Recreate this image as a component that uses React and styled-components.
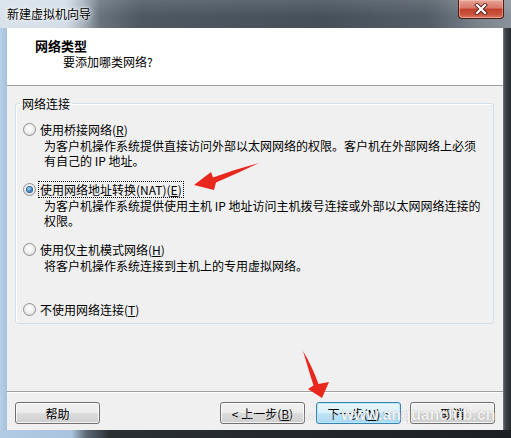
import React from 'react';
import styled, { createGlobalStyle } from 'styled-components';

const GlobalStyle = createGlobalStyle`
  html, body {
    margin: 0;
    padding: 0;
    background: #1f2327;
  }
  body {
    font-family: "Noto Sans CJK SC", "Microsoft YaHei", sans-serif;
    font-size: 12px;
    color: #000;
  }
`;

const Window = styled.div`
  position: relative;
  width: 511px;
  height: 438px;
  display: flex;
  flex-direction: column;
  overflow: hidden;
`;

const TitleBar = styled.div`
  height: 28px;
  display: flex;
  justify-content: space-between;
  align-items: flex-start;
  background:
    linear-gradient(to bottom, rgba(255, 255, 255, 0.12), rgba(255, 255, 255, 0) 60%),
    linear-gradient(
      to right,
      #d9e3ec 0,
      #d2dde8 66px,
      #aab5c0 82px,
      #68737e 100px,
      #4d5863 140px,
      #46505b 320px,
      #535d67 430px,
      #7b848d 480px,
      #8a939b 100%
    );
`;

const Caption = styled.div`
  line-height: 28px;
  padding-left: 7px;
  font-size: 12px;
  color: #000;
  text-shadow: 0 0 6px #fff, 0 0 3px #fff;
`;

const CloseButton = styled.div`
  width: 46px;
  height: 19px;
  margin-right: 7px;
  box-sizing: border-box;
  border: 1px solid #4b1c16;
  border-top: none;
  border-radius: 0 0 4px 4px;
  display: grid;
  place-items: center;
  background: linear-gradient(
    to bottom,
    #e7a497 0%,
    #d8786a 45%,
    #c2402c 50%,
    #c9523f 80%,
    #dc7a62 100%
  );
  box-shadow: inset 0 0 0 1px rgba(255, 210, 200, 0.45);
`;

const Middle = styled.div`
  flex: 1;
  display: flex;
  min-height: 0;
`;

const SideFrame = styled.div`
  width: ${(p) => p.$width}px;
  background: ${(p) =>
    p.$dark
      ? 'linear-gradient(to right, #767e86 0, #40464c 2px, #262a2e 100%)'
      : 'linear-gradient(to right, #b7cfe7, #a6c1dc)'};
`;

const BottomFrame = styled.div`
  height: 8px;
  background: linear-gradient(
    to right,
    #b3cbe4 0,
    #a9c3de 72px,
    #5d6873 86px,
    #2a2f34 110px,
    #1c2024 100%
  );
`;

const Client = styled.div`
  flex: 1;
  display: flex;
  flex-direction: column;
  background: #f0f0f0;
`;

const Header = styled.div`
  height: 58px;
  box-sizing: border-box;
  padding: 10px 0 0 28px;
  background: #fff;
  border-bottom: 1px solid #a0a0a0;
`;

const HeaderTitle = styled.div`
  font-size: 13px;
  font-weight: bold;
  line-height: 16px;
`;

const HeaderSub = styled.div`
  line-height: 15px;
  padding-left: 28px;
`;

const Body = styled.div`
  flex: 1;
  padding: 10px 9px 0 8px;
`;

const Group = styled.fieldset`
  margin: 0;
  padding: 0 7px 6px;
  border: 1px solid #d5dfe5;
  border-radius: 3px;
  box-shadow: inset 1px 1px 0 #fff;
  min-width: 0;
`;

const GroupLabel = styled.legend`
  margin-left: -3px;
  padding: 0 2px;
  line-height: 15px;
`;

const Options = styled.div`
  padding-top: 10px;
  display: flex;
  flex-direction: column;
`;

const Option = styled.div`
  min-height: 60px;
  &:last-child {
    min-height: 0;
  }
`;

const OptionHead = styled.div`
  display: flex;
  align-items: center;
  height: 16px;
`;

const Radio = styled.span`
  width: 13px;
  height: 13px;
  box-sizing: border-box;
  border-radius: 50%;
  border: 1px solid #8d9195;
  background: radial-gradient(circle at 50% 40%, #ffffff 0, #f1f1f1 45%, #d3d3d3 100%);
  display: grid;
  place-items: center;
  margin-right: 3px;

  &::after {
    content: '';
    width: 5px;
    height: 5px;
    border-radius: 50%;
    background: ${(p) =>
      p.$checked ? 'radial-gradient(circle at 40% 35%, #a9dcfa 0, #3a86c8 55%, #174f8a 100%)' : 'transparent'};
    box-shadow: ${(p) => (p.$checked ? '0 0 0 1px #2b5f93' : 'none')};
  }
`;

const OptionLabel = styled.span`
  line-height: 15px;
  padding: 0 1px;
  outline: ${(p) => (p.$focused ? '1px dotted #000' : 'none')};
`;

const OptionText = styled.div`
  padding-left: 21px;
  line-height: 15px;
  padding-top: 1px;
`;

const Footer = styled.div`
  height: 39px;
  box-sizing: border-box;
  padding: 10px 8px 0;
  border-top: 1px solid #a0a0a0;
  box-shadow: inset 0 1px 0 #fff;
  display: flex;
  align-items: flex-start;
`;

const Spacer = styled.div`
  flex: 1;
`;

const Button = styled.div`
  width: 85px;
  height: 22px;
  box-sizing: border-box;
  margin-left: ${(p) => p.$gap || 0}px;
  border: 1px solid ${(p) => (p.$primary ? '#3c7fb1' : '#707070')};
  border-radius: 3px;
  display: flex;
  align-items: center;
  justify-content: center;
  line-height: 15px;
  background: ${(p) =>
    p.$primary
      ? 'linear-gradient(to bottom, #eaf6fd 0%, #d9f0fc 50%, #bee6fd 50%, #a7d9f5 100%)'
      : 'linear-gradient(to bottom, #f2f2f2 0%, #ebebeb 50%, #dddddd 50%, #cfcfcf 100%)'};
  box-shadow: inset 0 0 0 1px ${(p) => (p.$primary ? 'rgba(180, 235, 255, 0.9)' : 'rgba(255, 255, 255, 0.75)')};
`;

const Overlay = styled.svg`
  position: absolute;
  left: 0;
  top: 0;
  pointer-events: none;
`;

const Watermark = styled.div`
  position: absolute;
  left: 246px;
  top: 406px;
  display: flex;
  align-items: baseline;
  gap: 3px;
  pointer-events: none;
`;

const WatermarkUrl = styled.span`
  font-family: "Liberation Sans", Arial, sans-serif;
  font-size: 10px;
  color: rgba(215, 215, 215, 0.5);
`;

const WatermarkSite = styled.span`
  font-family: "Liberation Sans", Arial, sans-serif;
  font-size: 16px;
  font-weight: bold;
  color: rgba(255, 255, 255, 0.9);
  text-shadow: 0 0 1px rgba(90, 90, 90, 0.6);
`;

const options = [
  {
    label: '使用桥接网络',
    key: 'R',
    text: ['为客户机操作系统提供直接访问外部以太网网络的权限。客户机在外部网络上必须', '有自己的 IP 地址。'],
  },
  {
    label: '使用网络地址转换(NAT)',
    key: 'E',
    checked: true,
    text: ['为客户机操作系统提供使用主机 IP 地址访问主机拨号连接或外部以太网网络连接的', '权限。'],
  },
  {
    label: '使用仅主机模式网络',
    key: 'H',
    text: ['将客户机操作系统连接到主机上的专用虚拟网络。'],
  },
  { label: '不使用网络连接', key: 'T', text: [] },
];

export default function App() {
  return (
    <Window>
      <GlobalStyle />
      <TitleBar>
        <Caption>新建虚拟机向导</Caption>
        <CloseButton>
          <svg width="14" height="12" viewBox="0 0 14 12">
            <path d="M3 2 L11 10 M11 2 L3 10" stroke="#5a241c" strokeWidth="4" strokeLinecap="square" />
            <path d="M3 2 L11 10 M11 2 L3 10" stroke="#fff" strokeWidth="2.2" strokeLinecap="square" />
          </svg>
        </CloseButton>
      </TitleBar>

      <Middle>
        <SideFrame $width={7} />
        <Client>
          <Header>
            <HeaderTitle>网络类型</HeaderTitle>
            <HeaderSub>要添加哪类网络?</HeaderSub>
          </Header>

          <Body>
            <Group>
              <GroupLabel>网络连接</GroupLabel>
              <Options>
                {options.map((o) => (
                  <Option key={o.key}>
                    <OptionHead>
                      <Radio $checked={o.checked} />
                      <OptionLabel $focused={o.checked}>
                        {o.label}(<u>{o.key}</u>)
                      </OptionLabel>
                    </OptionHead>
                    {o.text.length > 0 && (
                      <OptionText>
                        {o.text.map((line) => (
                          <div key={line}>{line}</div>
                        ))}
                      </OptionText>
                    )}
                  </Option>
                ))}
              </Options>
            </Group>
          </Body>

          <Footer>
            <Button>帮助</Button>
            <Spacer />
            <Button>
              &lt; 上一步(<u>B</u>)
            </Button>
            <Button $gap={11} $primary>
              下一步(<u>N</u>) &gt;
            </Button>
            <Button $gap={9}>取消</Button>
          </Footer>
        </Client>
        <SideFrame $width={8} $dark />
      </Middle>
      <BottomFrame />

      {/* red annotation arrows */}
      <Overlay width="511" height="438" viewBox="0 0 511 438">
        <path
          d="M194 185 L211 172 L213 177.5 Q236 169 259 163 Q238 173 216 182.5 L214 190 Z"
          fill="#e9281d"
        />
        <path
          d="M303 351 Q312 366 318.5 384 L329 382 L322 398 L308 389 L313.5 385.5 Q308 368 303 351 Z"
          fill="#e9281d"
        />
      </Overlay>

      <Watermark>
        <WatermarkUrl>https://blog.csdn.net/</WatermarkUrl>
        <WatermarkSite>www.anquanclub.cn</WatermarkSite>
      </Watermark>
    </Window>
  );
}
